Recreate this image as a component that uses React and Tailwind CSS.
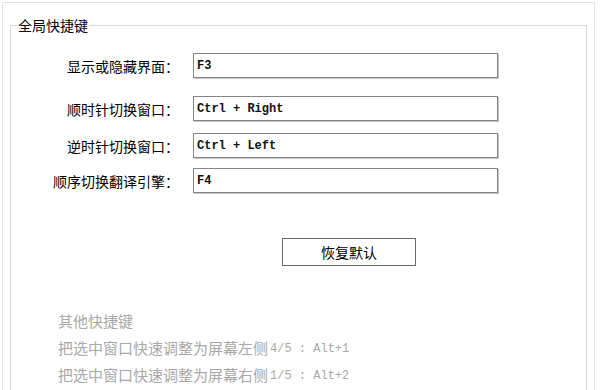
export default function App() {
  const cjk = { fontFamily: '"Noto Sans CJK SC", "Noto Sans", sans-serif' };
  const rows = [
    { label: "显示或隐藏界面：", value: "F3", mt: "mt-[18px]" },
    { label: "顺时针切换窗口：", value: "Ctrl + Right", mt: "mt-[18px]" },
    { label: "逆时针切换窗口：", value: "Ctrl + Left", mt: "mt-[12px]" },
    { label: "顺序切换翻译引擎：", value: "F4", mt: "mt-[10px]" },
  ];
  const others = [
    { text: "其他快捷键", key: "" },
    { text: "把选中窗口快速调整为屏幕左侧", key: "4/5 : Alt+1" },
    { text: "把选中窗口快速调整为屏幕右侧", key: "1/5 : Alt+2" },
  ];
  return (
    <div className="w-[600px] h-[390px] overflow-hidden bg-white pt-[2px] pl-[2px]" style={cjk}>
      <div className="w-[593px] h-[420px] border border-[#e2e2e2] px-[7px] pt-[12px]">
        <fieldset className="h-[400px] border border-[#d9d9d9] m-0 p-0">
          <legend className="ml-[6px] px-[1px] text-[14px] leading-[20px] text-black">全局快捷键</legend>
          <div className="flex flex-col">
            {rows.map((r) => (
              <div key={r.label} className={`flex items-center ${r.mt}`}>
                <div className="w-[168px] text-right text-[14px] leading-[20px] text-black whitespace-nowrap">{r.label}</div>
                <div
                  className="ml-[14px] w-[305px] h-[25px] border border-[#858585] shadow-[1px_1px_0_#c4c4c4] flex items-center pl-[3px] text-[12px] font-bold text-[#111]"
                  style={{ fontFamily: '"Liberation Mono", monospace', whiteSpace: "pre" }}
                >
                  {r.value}
                </div>
              </div>
            ))}
            <div className="mt-[45px] pl-[271px]">
              <div className="w-[134px] h-[28px] border border-[#6a6a6a] flex items-center justify-center text-[14px] text-black">
                恢复默认
              </div>
            </div>
            <div className="mt-[42px] pl-[47px] flex flex-col text-[#a8a8a8]">
              {others.map((o) => (
                <div key={o.text} className="h-[27px] flex items-center text-[15px] whitespace-nowrap">
                  <span>{o.text}</span>
                  {o.key && (
                    <span className="ml-[2px] text-[12px]" style={{ fontFamily: '"Liberation Mono", monospace', whiteSpace: "pre" }}>
                      {o.key}
                    </span>
                  )}
                </div>
              ))}
            </div>
          </div>
        </fieldset>
      </div>
    </div>
  );
}
